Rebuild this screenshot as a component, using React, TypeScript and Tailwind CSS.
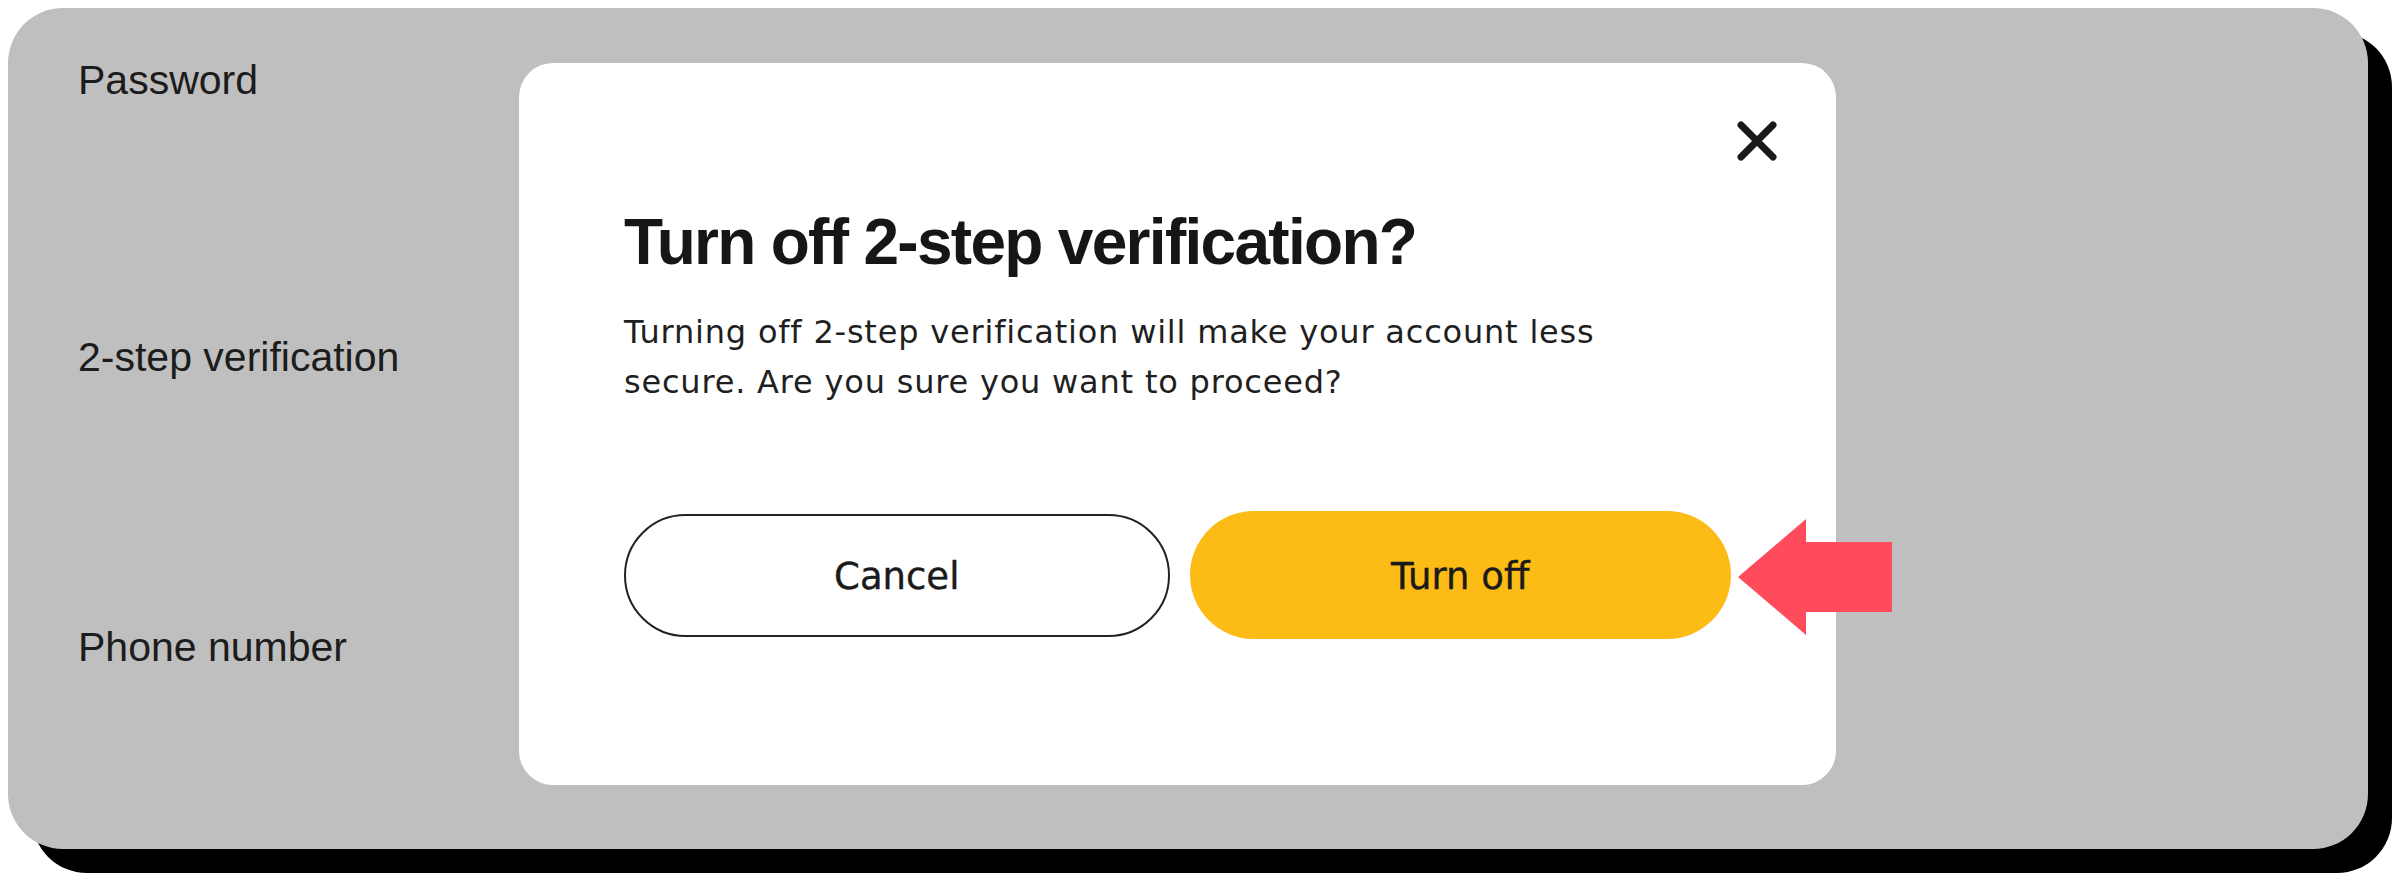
import React from "react"

const LABELS = [
    { text: "Password", gap: "mt-0" },
    { text: "2-step verification", gap: "mt-[236px]" },
    { text: "Phone number", gap: "mt-[249px]" },
]

function CloseIcon() {
    return (
        <svg width="42" height="40" viewBox="0 0 42 40" fill="none" aria-hidden="true">
            <path d="M5 4 L37 36 M37 4 L5 36" stroke="#1a1a1a" strokeWidth="7" strokeLinecap="round" />
        </svg>
    )
}

function PointerArrow() {
    return (
        <svg
            className="absolute left-[1730px] top-[511px]"
            width="154"
            height="116"
            viewBox="0 0 154 116"
            aria-hidden="true"
        >
            <path d="M0 58 L68 0 L68 23 L154 23 L154 93 L68 93 L68 116 Z" fill="#ff4b5c" />
        </svg>
    )
}

export default function App() {
    return (
        <div className="w-[2400px] h-[882px] bg-white p-[8px]">
            <div className="relative w-[2360px] h-[841px] rounded-[55px] bg-[#bfbfbf] shadow-[24px_24px_0_0_#000]">
                {/* settings rows behind the dialog */}
                <div className="flex flex-col pt-[52px] pl-[70px] font-['Liberation_Sans',Arial,sans-serif] text-[41px] leading-none text-[#1c1c1c]">
                    {LABELS.map((l) => (
                        <div key={l.text} className={l.gap}>
                            {l.text}
                        </div>
                    ))}
                </div>

                <div
                    role="dialog"
                    aria-label="Turn off 2-step verification?"
                    className="absolute left-[511px] top-[55px] w-[1317px] h-[722px] rounded-[34px] bg-white flex flex-col px-[105px] pt-[58px]"
                >
                    <div className="flex justify-end -mr-[47px]">
                        <button aria-label="Close" className="flex">
                            <CloseIcon />
                        </button>
                    </div>

                    <h2 className="mt-[49px] font-['Liberation_Sans',Arial,sans-serif] font-bold text-[64px] leading-none tracking-[-1.7px] text-[#161616]">
                        Turn off 2-step verification?
                    </h2>

                    <p className="mt-[33px] max-w-[1010px] font-['DejaVu_Sans',sans-serif] text-[32px] leading-[50px] tracking-[0.8px] text-[#1f1f1f]">
                        Turning off 2-step verification will make your account less secure. Are you sure you want to proceed?
                    </p>

                    <div className="mt-[104px] flex items-center gap-[20px] font-['DejaVu_Sans',sans-serif] text-[37px] text-[#1a1a1a] [-webkit-text-stroke:0.4px_#1a1a1a]">
                        <button className="flex-1 h-[123px] pt-[4px] rounded-full border-[2.5px] border-[#222] bg-white">
                            Cancel
                        </button>
                        <button className="flex-1 h-[128px] pt-[4px] rounded-full bg-[#fdbc15]">
                            Turn off
                        </button>
                    </div>
                </div>

                <PointerArrow />
            </div>
        </div>
    )
}
